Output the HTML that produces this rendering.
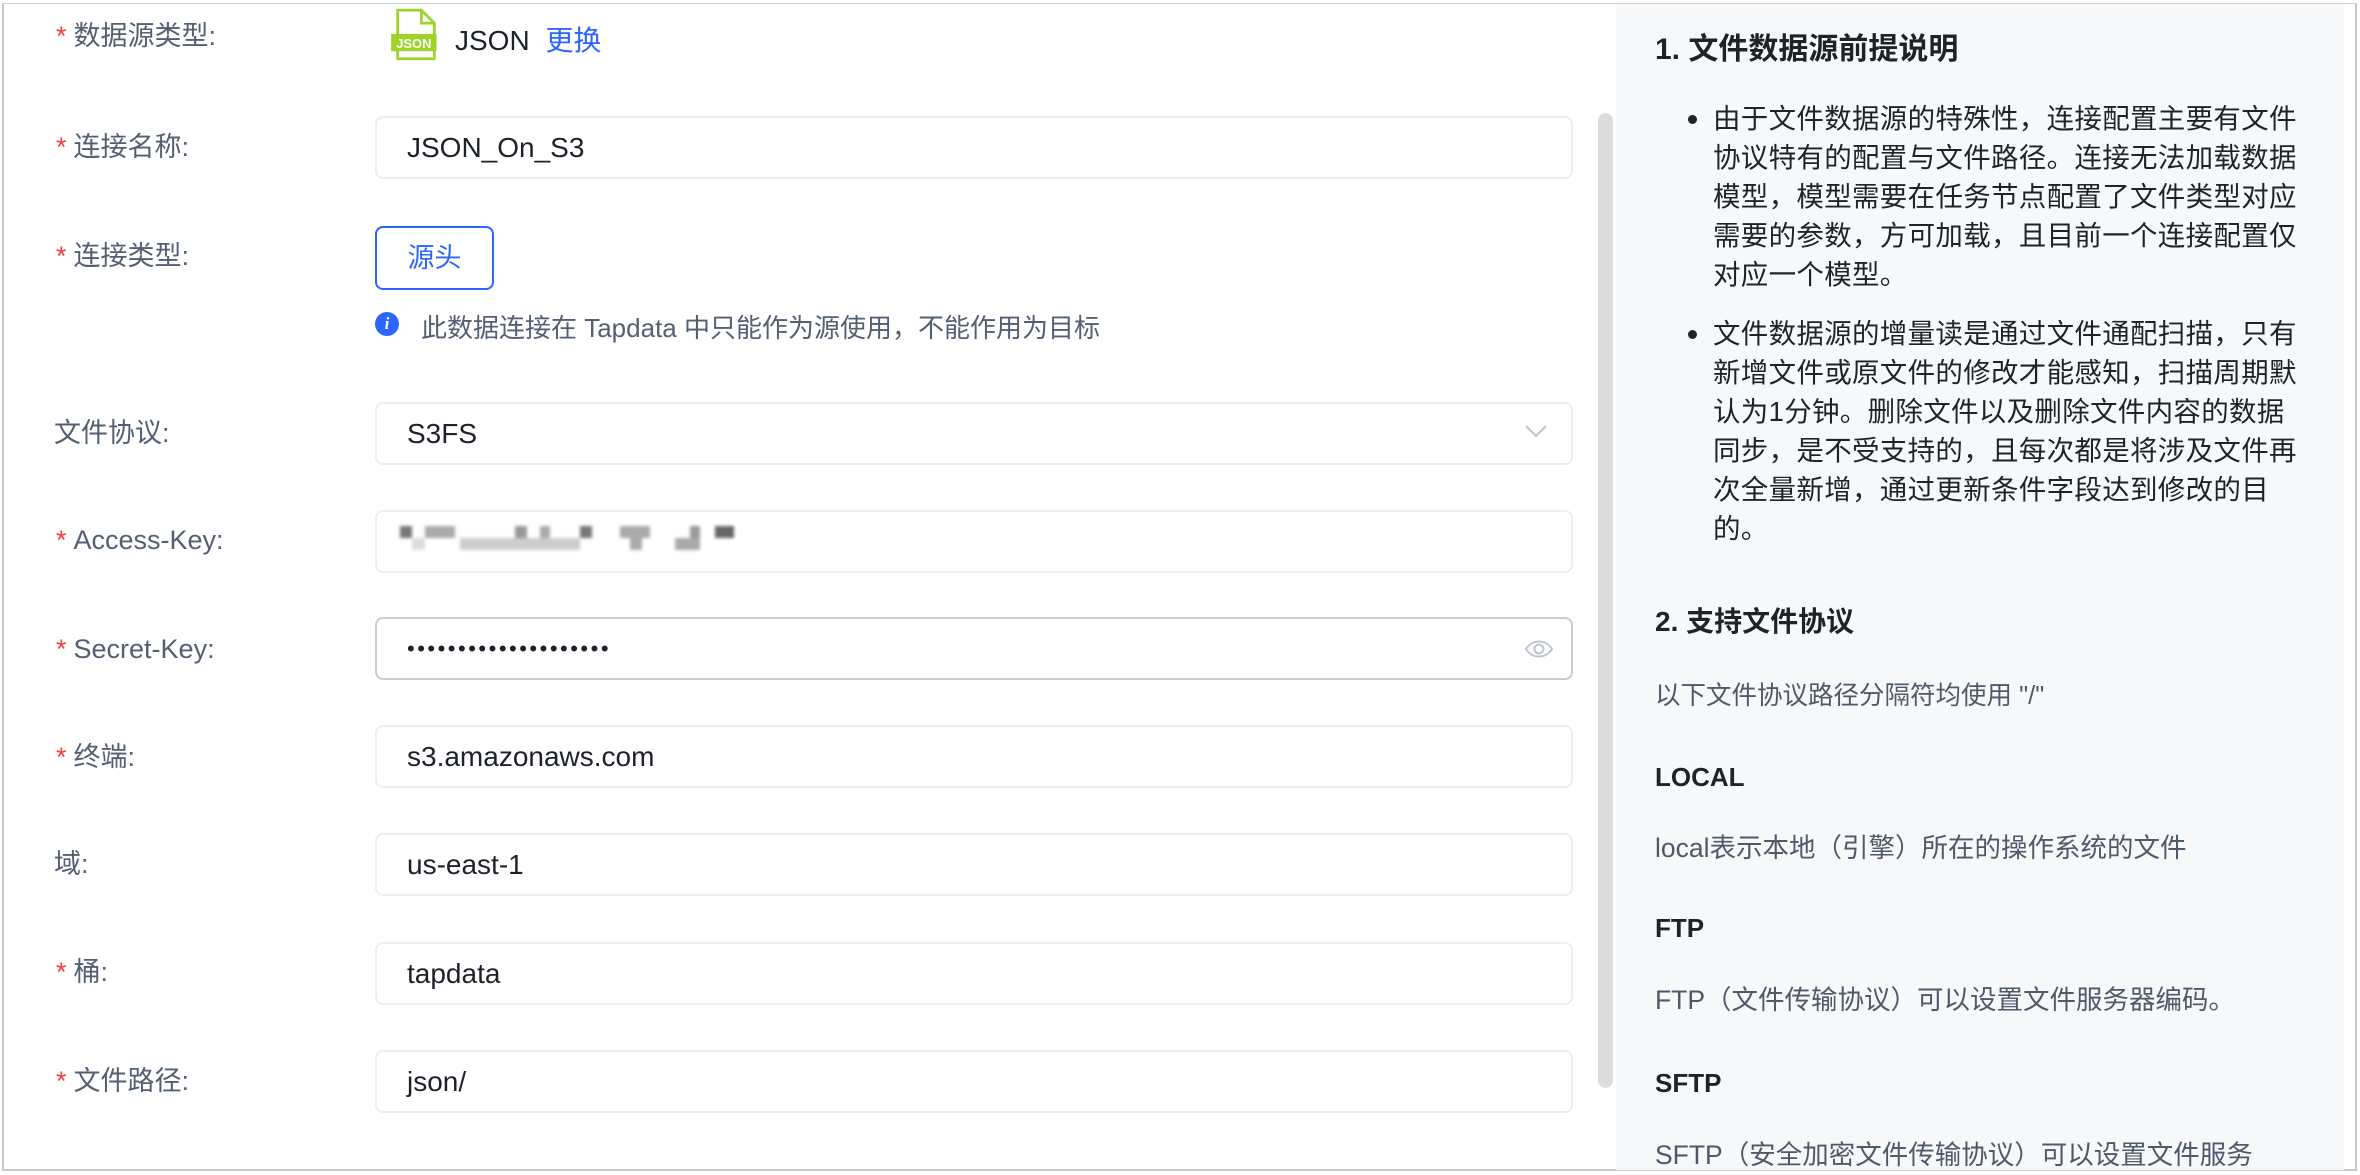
<!DOCTYPE html>
<html><head><meta charset="utf-8"><style>
*{margin:0;padding:0;box-sizing:border-box}
body{width:2360px;height:1174px;overflow:hidden;background:#fff;font-family:"Liberation Sans","Noto Sans CJK SC",sans-serif;position:relative}
.frame{position:absolute;left:2px;top:3px;width:2355px;height:1168px;border:2px solid #c8c8c8;border-top:1px solid #d0d0d0}
.a{position:absolute;white-space:nowrap}
.lbl{position:absolute;left:56px;font-size:27px;color:#535f72;line-height:30px}
.lbl i{font-style:normal;color:#f53f3f;margin-right:7px}
.inp{position:absolute;left:375px;width:1198px;height:63px;border:2px solid #eceef2;border-radius:8px;font-size:28px;color:#1d2129;padding-left:30px;line-height:59px}
.right{position:absolute;left:1616px;top:4px;width:728px;height:1166px;background:#f7f8fa}
.rt{position:absolute;left:1655px;font-size:26px;line-height:39px;color:#1f2329}
.b{font-size:27.5px;letter-spacing:0.3px}
.h{font-weight:bold;font-size:28px}
.g{color:#4e5969}
</style></head><body>
<div class="frame"></div>
<div class="right"></div>
<div class="a" style="left:1598px;top:113px;width:15px;height:975px;background:#dcdcdc;border-radius:8px"></div>

<div class="lbl" style="top:21px"><i>*</i>数据源类型:</div>
<svg class="a" style="left:389px;top:8px" width="54" height="54" viewBox="0 0 50 50">
<path d="M8 2 H30 L42 14 V47 H8 Z" fill="#fff" stroke="#9ed32a" stroke-width="2.5"/>
<path d="M30 2 V14 H42" fill="none" stroke="#9ed32a" stroke-width="2.5"/>
<rect x="2" y="24" width="42" height="16" fill="#9ed32a"/>
<text x="23" y="37" font-size="12" font-weight="bold" fill="#fff" text-anchor="middle" font-family="Liberation Sans">JSON</text>
</svg>
<div class="a" style="left:455px;top:19px;font-size:28px;color:#1d2129">JSON <span style="color:#2c65ff;margin-left:8px">更换</span></div>

<div class="lbl" style="top:132px"><i>*</i>连接名称:</div>
<div class="inp" style="top:116px">JSON_On_S3</div>

<div class="lbl" style="top:241px"><i>*</i>连接类型:</div>
<div class="a" style="left:375px;top:226px;width:119px;height:64px;border:2px solid #2c65ff;border-radius:8px;color:#2c65ff;font-size:27px;text-align:center;line-height:60px">源头</div>
<div class="a" style="left:375px;top:312px;width:24px;height:24px;border-radius:50%;background:#2c65ff;color:#fff;font-size:17px;font-weight:bold;font-style:italic;text-align:center;line-height:24px;font-family:'Liberation Serif',serif">i</div>
<div class="a" style="left:421px;top:308px;font-size:26px;color:#535f72">此数据连接在 Tapdata 中只能作为源使用，不能作用为目标</div>

<div class="lbl" style="top:418px;left:54px">文件协议:</div>
<div class="inp" style="top:402px">S3FS</div>
<svg class="a" style="left:1525px;top:424px" width="22" height="14"><path d="M1 2 L11 12 L21 2" fill="none" stroke="#c0c4cc" stroke-width="2"/></svg>

<div class="lbl" style="top:525px"><i>*</i>Access-Key:</div>
<div class="inp" style="top:510px"></div>
<div class="a" style="left:400px;top:526px;width:334px;height:24px;filter:blur(1.5px);background:
linear-gradient(90deg,#777 0 12px,transparent 12px 25px,#aaa 25px 55px,transparent 55px 115px,#999 115px 127px,transparent 127px 140px,#aaa 140px 150px,transparent 150px 180px,#777 180px 192px,transparent 192px 220px,#aaa 220px 250px,transparent 250px 290px,#999 290px 300px,transparent 300px 315px,#666 315px 334px) top/100% 12px no-repeat,
linear-gradient(90deg,transparent 0 12px,#ddd 12px 25px,transparent 25px 60px,#ccc 60px 180px,transparent 180px 230px,#aaa 230px 242px,transparent 242px 275px,#aaa 275px 300px,transparent 300px 334px) bottom/100% 12px no-repeat"></div>

<div class="lbl" style="top:634px"><i>*</i>Secret-Key:</div>
<div class="inp" style="top:617px;border-color:#c9cdd4;font-size:22px;letter-spacing:2.5px">••••••••••••••••••••</div>
<svg class="a" style="left:1524px;top:638px" width="30" height="22" viewBox="0 0 30 22"><path d="M2 11 C8 1 22 1 28 11 C22 21 8 21 2 11 Z" fill="none" stroke="#c0c4cc" stroke-width="2"/><circle cx="15" cy="11" r="4.5" fill="none" stroke="#c0c4cc" stroke-width="2"/></svg>

<div class="lbl" style="top:742px"><i>*</i>终端:</div>
<div class="inp" style="top:725px">s3.amazonaws.com</div>

<div class="lbl" style="top:849px;left:54px">域:</div>
<div class="inp" style="top:833px">us-east-1</div>

<div class="lbl" style="top:957px"><i>*</i>桶:</div>
<div class="inp" style="top:942px">tapdata</div>

<div class="lbl" style="top:1066px"><i>*</i>文件路径:</div>
<div class="inp" style="top:1050px">json/</div>

<div class="rt h" style="top:30px;font-size:30px">1. 文件数据源前提说明</div>
<div class="rt b" style="left:1713px;top:99px;width:592px;white-space:normal">由于文件数据源的特殊性，连接配置主要有文件协议特有的配置与文件路径。连接无法加载数据模型，模型需要在任务节点配置了文件类型对应需要的参数，方可加载，且目前一个连接配置仅对应一个模型。</div>
<div class="a" style="left:1688px;top:115px;width:9px;height:9px;border-radius:50%;background:#1f2329"></div>
<div class="rt b" style="left:1713px;top:314px;width:592px;white-space:normal">文件数据源的增量读是通过文件通配扫描，只有新增文件或原文件的修改才能感知，扫描周期默认为1分钟。删除文件以及删除文件内容的数据<br>同步，是不受支持的，且每次都是将涉及文件再次全量新增，通过更新条件字段达到修改的目的。</div>
<div class="a" style="left:1688px;top:330px;width:9px;height:9px;border-radius:50%;background:#1f2329"></div>
<div class="rt h" style="top:602px">2. 支持文件协议</div>
<div class="rt g" style="top:677px;font-size:25.5px">以下文件协议路径分隔符均使用 "/"</div>
<div class="rt h" style="top:758px;font-size:26px">LOCAL</div>
<div class="rt g" style="top:829px;font-size:26.5px">local表示本地（引擎）所在的操作系统的文件</div>
<div class="rt h" style="top:909px;font-size:26px">FTP</div>
<div class="rt g" style="top:981px;font-size:26.5px">FTP（文件传输协议）可以设置文件服务器编码。</div>
<div class="rt h" style="top:1064px;font-size:26px">SFTP</div>
<div class="rt g" style="top:1136px;font-size:26.5px">SFTP（安全加密文件传输协议）可以设置文件服务</div>
</body></html>
